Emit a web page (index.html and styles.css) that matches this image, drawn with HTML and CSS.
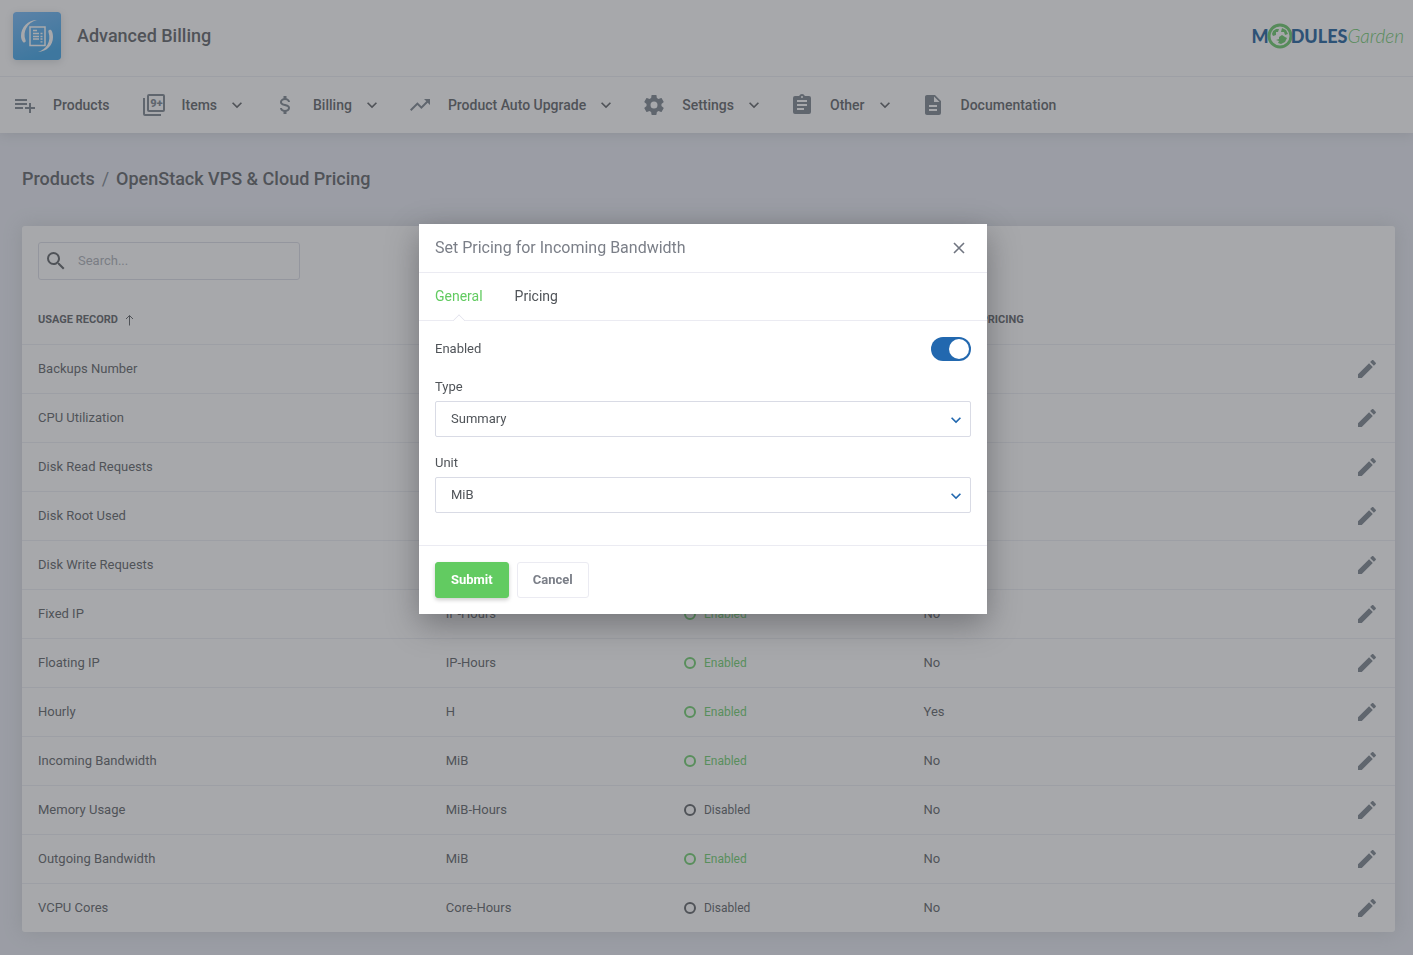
FILE: index.html
```html
<!DOCTYPE html>
<html lang="en">

<head>
    <meta charset="UTF-8">
    <meta name="viewport" content="width=device-width, initial-scale=1.0">
    <title>Advanced Billing</title>
    <link rel="stylesheet" href="styles.css">
</head>

<body>
    <svg class="sprite" xmlns="http://www.w3.org/2000/svg">
        <symbol id="chevron" viewBox="0 0 24 24">
            <path d="M7.41,8.58L12,13.17L16.59,8.58L18,10L12,16L6,10L7.41,8.58Z" />
        </symbol>
        <symbol id="pencil" viewBox="0 0 24 24">
            <path d="M20.71,7.04C21.1,6.65 21.1,6 20.71,5.63L18.37,3.29C18,2.9 17.35,2.9 16.96,3.29L15.12,5.12L18.87,8.87M3,17.25V21H6.75L17.81,9.93L14.06,6.18L3,17.25Z" />
        </symbol>
    </svg>

    <header class="header">
        <div class="top">
            <svg class="app-icon" viewBox="0 0 48 48">
                <defs>
                    <linearGradient id="blue" x1="0" y1="0" x2="0.4" y2="1">
                        <stop offset="0" stop-color="#69b3f7" />
                        <stop offset="1" stop-color="#2c9de6" />
                    </linearGradient>
                </defs>
                <rect width="48" height="48" rx="3" fill="url(#blue)" />
                <path fill="#fff" d="M24 8C15 8 8 15 8 24C8 27 9 29 10.500 30.500C12 31 13.300 29.500 12.500 28C9.500 20 14 10.500 24 8Z" />
                <path fill="#fff" d="M25 40C34 39.500 40 33 40 25C40 22 39.300 19.500 38.300 18.200C36.500 17 34.800 18.400 35.500 20.300C38.500 29 33.500 37.500 25 40Z" />
                <path fill="none" stroke="#fff" stroke-width="1.500" d="M17 15H32V33.500H17Z" />
                <path fill="none" stroke="#fff" stroke-width="1.300" d="M20 18.500H24M20 21.500H26M20 24.500H26M20 27H26M27.500 21.500H29.500M27.500 24.500H29.500M27.500 27H29.500M27.500 29.800H29.500" />
            </svg>
            <h1 class="app-name">Advanced Billing</h1>
            <a class="logo" href="#">
                <span class="logo-bold">M</span>
                <svg class="logo-globe" viewBox="0 0 26 26">
                    <circle cx="13" cy="13" r="11" fill="none" stroke="#5cc45c" stroke-width="3" />
                    <path fill="#5cc45c" d="M5 11L6 8L9 6L12 6L11 9L9 9L9 12L6 13ZM15 5L19 7L21 11L18 12L17 9L14 9ZM12 14L15 12L18 14L20 15L18 19L14 21L11 20L12 18L9 17L12 16Z" />
                </svg>
                <span class="logo-bold">DULES</span>
                <span class="logo-thin">Garden</span>
            </a>
        </div>
        <nav class="nav">
            <a class="nav-item" href="#">
                <svg class="icon" viewBox="0 0 24 24"><path d="M2,16H10V14H2M18,14V10H16V14H12V16H16V20H18V16H22V14M14,6H2V8H14M14,10H2V12H14V10Z" /></svg>
                Products
            </a>
            <a class="nav-item" href="#">
                <svg class="icon" viewBox="0 0 24 24">
                    <path d="M21,17V3H7V17H21M21,1A2,2 0 0,1 23,3V17A2,2 0 0,1 21,19H7A2,2 0 0,1 5,17V3A2,2 0 0,1 7,1H21M3,5V21H19V23H3A2,2 0 0,1 1,21V5H3Z" />
                    <text class="icon-text" x="14.500" y="14" text-anchor="middle">9+</text>
                </svg>
                Items
                <svg class="icon chevron"><use href="#chevron" /></svg>
            </a>
            <a class="nav-item" href="#">
                <svg class="icon" viewBox="0 0 24 24"><path d="M7,15H9C9,16.08 10.37,17 12,17C13.63,17 15,16.08 15,15C15,13.9 13.96,13.5 11.76,12.97C9.64,12.44 7,11.78 7,9C7,7.21 8.47,5.69 10.5,5.18V3H13.5V5.18C15.53,5.69 17,7.21 17,9H15C15,7.92 13.63,7 12,7C10.37,7 9,7.92 9,9C9,10.1 10.04,10.5 12.24,11.03C14.36,11.56 17,12.22 17,15C17,16.79 15.53,18.31 13.5,18.82V21H10.5V18.82C8.47,18.31 7,16.79 7,15Z" /></svg>
                Billing
                <svg class="icon chevron"><use href="#chevron" /></svg>
            </a>
            <a class="nav-item" href="#">
                <svg class="icon" viewBox="0 0 24 24"><path d="M16,6L18.29,8.29L13.41,13.17L9.41,9.17L2,16.59L3.41,18L9.41,12L13.41,16L19.71,9.71L22,12V6H16Z" /></svg>
                Product Auto Upgrade
                <svg class="icon chevron"><use href="#chevron" /></svg>
            </a>
            <a class="nav-item" href="#">
                <svg class="icon" viewBox="0 0 24 24"><path d="M12,15.5A3.5,3.5 0 0,1 8.5,12A3.5,3.5 0 0,1 12,8.5A3.5,3.5 0 0,1 15.5,12A3.5,3.5 0 0,1 12,15.5M19.43,12.97C19.47,12.65 19.5,12.33 19.5,12C19.5,11.67 19.47,11.34 19.43,11L21.54,9.37C21.73,9.22 21.78,8.95 21.66,8.73L19.66,5.27C19.54,5.05 19.27,4.96 19.05,5.05L16.56,6.05C16.04,5.66 15.5,5.32 14.87,5.07L14.5,2.42C14.46,2.18 14.25,2 14,2H10C9.75,2 9.54,2.18 9.5,2.42L9.13,5.07C8.5,5.32 7.96,5.66 7.44,6.05L4.95,5.05C4.73,4.96 4.46,5.05 4.34,5.27L2.34,8.73C2.21,8.95 2.27,9.22 2.46,9.37L4.57,11C4.53,11.34 4.5,11.67 4.5,12C4.5,12.33 4.53,12.65 4.57,12.97L2.46,14.63C2.27,14.78 2.21,15.05 2.34,15.27L4.34,18.73C4.46,18.95 4.73,19.03 4.95,18.95L7.44,17.94C7.96,18.34 8.5,18.68 9.13,18.93L9.5,21.58C9.54,21.82 9.75,22 10,22H14C14.25,22 14.46,21.82 14.5,21.58L14.87,18.93C15.5,18.67 16.04,18.34 16.56,17.94L19.05,18.95C19.27,19.03 19.54,18.95 19.66,18.73L21.66,15.27C21.78,15.05 21.73,14.78 21.54,14.63L19.43,12.97Z" /></svg>
                Settings
                <svg class="icon chevron"><use href="#chevron" /></svg>
            </a>
            <a class="nav-item" href="#">
                <svg class="icon" viewBox="0 0 24 24"><path fill-rule="evenodd" d="M17,9H7V7H17ZM17,13H7V11H17ZM14,17H7V15H14ZM12,3A1,1 0 0,1 13,4A1,1 0 0,1 12,5A1,1 0 0,1 11,4A1,1 0 0,1 12,3M19,3H14.82C14.4,1.84 13.3,1 12,1C10.7,1 9.6,1.84 9.18,3H5A2,2 0 0,0 3,5V19A2,2 0 0,0 5,21H19A2,2 0 0,0 21,19V5A2,2 0 0,0 19,3Z" /></svg>
                Other
                <svg class="icon chevron"><use href="#chevron" /></svg>
            </a>
            <a class="nav-item" href="#">
                <svg class="icon" viewBox="0 0 24 24"><path fill-rule="evenodd" d="M13,9H18.5L13,3.5V9M6,2H14L20,8V20A2,2 0 0,1 18,22H6C4.89,22 4,21.1 4,20V4C4,2.89 4.89,2 6,2M16,18V16H8V18H16M16,14V12H8V14H16Z" /></svg>
                Documentation
            </a>
        </nav>
    </header>

    <main class="main">
        <h2 class="breadcrumbs"><a href="#">Products</a><span class="slash">/</span>OpenStack VPS &amp; Cloud Pricing</h2>
        <section class="card">
            <div class="toolbar">
                <label class="search">
                    <svg class="icon" viewBox="0 0 24 24"><path d="M9.5,3A6.5,6.5 0 0,1 16,9.5C16,11.11 15.41,12.59 14.44,13.73L14.71,14H15.5L20.5,19L19,20.5L14,15.5V14.71L13.73,14.44C12.59,15.41 11.11,16 9.5,16A6.5,6.5 0 0,1 3,9.5A6.5,6.5 0 0,1 9.5,3M9.5,5C7,5 5,7 5,9.5C5,12 7,14 9.5,14C12,14 14,12 14,9.5C14,7 12,5 9.5,5Z" /></svg>
                    <input type="text" placeholder="Search..." aria-label="Search">
                </label>
            </div>
            <table class="table">
                <colgroup>
                    <col class="col-record">
                    <col class="col-unit">
                    <col class="col-status">
                    <col>
                    <col class="col-actions">
                </colgroup>
                <thead>
                    <tr>
                        <th>Usage Record <svg class="sort" viewBox="0 0 9 12"><path d="M4.500 11.500V1.500M1 5L4.500 1.500L8 5" /></svg></th>
                        <th>Unit</th>
                        <th>Status</th>
                        <th>Extended Pricing</th>
                        <th></th>
                    </tr>
                </thead>
                <tbody id="rows"></tbody>
            </table>
        </section>
    </main>

    <div class="overlay">
        <form class="modal" role="dialog" aria-labelledby="modalTitle">
            <div class="modal-header">
                <h3 class="modal-title" id="modalTitle">Set Pricing for Incoming Bandwidth</h3>
                <button class="close" type="button" aria-label="Close">
                    <svg viewBox="0 0 12 12"><path d="M1 1L11 11M11 1L1 11" /></svg>
                </button>
            </div>
            <div class="tabs">
                <a class="tab tab-active" href="#">General</a>
                <a class="tab" href="#">Pricing</a>
            </div>
            <div class="modal-body">
                <div class="switch-row">
                    <label for="enabled">Enabled</label>
                    <input class="switch" type="checkbox" id="enabled" checked>
                </div>
                <div class="field">
                    <label for="type">Type</label>
                    <div class="select">
                        <select id="type">
                            <option>Summary</option>
                        </select>
                        <svg class="select-arrow"><use href="#chevron" /></svg>
                    </div>
                </div>
                <div class="field">
                    <label for="unit">Unit</label>
                    <div class="select">
                        <select id="unit">
                            <option>MiB</option>
                        </select>
                        <svg class="select-arrow"><use href="#chevron" /></svg>
                    </div>
                </div>
            </div>
            <div class="modal-footer">
                <button class="btn btn-submit" type="button">Submit</button>
                <button class="btn btn-cancel" type="button">Cancel</button>
            </div>
        </form>
    </div>

    <script>
        let rows = document.getElementById("rows");
        // name, unit, status, pricing
        let records = [
            ["Backups Number", "", "Enabled", "No"],
            ["CPU Utilization", "%", "Enabled", "No"],
            ["Disk Read Requests", "", "Enabled", "No"],
            ["Disk Root Used", "MiB", "Enabled", "No"],
            ["Disk Write Requests", "", "Enabled", "No"],
            ["Fixed IP", "IP-Hours", "Enabled", "No"],
            ["Floating IP", "IP-Hours", "Enabled", "No"],
            ["Hourly", "H", "Enabled", "Yes"],
            ["Incoming Bandwidth", "MiB", "Enabled", "No"],
            ["Memory Usage", "MiB-Hours", "Disabled", "No"],
            ["Outgoing Bandwidth", "MiB", "Enabled", "No"],
            ["VCPU Cores", "Core-Hours", "Disabled", "No"]
        ];

        rows.innerHTML = records.map(([name, unit, status, pricing]) => `
            <tr>
                <td>${name}</td>
                <td>${unit}</td>
                <td><span class="status ${status.toLowerCase()}">${status}</span></td>
                <td>${pricing}</td>
                <td><button class="edit" type="button" aria-label="Edit ${name}"><svg class="icon"><use href="#pencil" /></svg></button></td>
            </tr>`).join("");
    </script>
</body>

</html>
```
FILE: styles.css
```css
*,
*::before,
*::after {
    margin: 0;
    padding: 0;
    box-sizing: border-box;
}

body {
    min-height: 100vh;
    background: #e6e9f2;
    color: #505459;
    font: 13px/20px Roboto, "Liberation Sans", sans-serif;
}

a {
    color: inherit;
    text-decoration: none;
}

button,
input,
select {
    font: inherit;
    color: inherit;
}

.sprite {
    position: absolute;
    width: 0;
    height: 0;
}

.icon {
    width: 24px;
    height: 24px;
    flex: none;
    fill: #707a85;
}

.icon-text {
    font-size: 11px;
    font-weight: 900;
}

.header {
    background: #fff;
    box-shadow: 0 1px 12px rgba(80, 90, 90, .2);
}

.top {
    display: flex;
    align-items: center;
    height: 77px;
    padding: 0 9px 4px 13px;
    border-bottom: 1px solid #ebedf2;
}

.app-icon {
    width: 48px;
    height: 48px;
    margin-right: 16px;
    border-radius: 3px;
    box-shadow: 0 2px 8px rgba(80, 90, 100, .25);
}

.app-name {
    font-size: 18px;
    font-weight: 500;
}

.logo {
    display: flex;
    align-items: center;
    margin-left: auto;
    font-size: 19px;
    font-family: Lato, sans-serif;
}

.logo-bold {
    font-size: 18px;
    font-weight: 900;
    color: #0b5394;
}

.logo-globe {
    width: 26px;
    height: 26px;
    margin: 0 -2px;
}

.logo-thin {
    font-weight: 300;
    font-style: italic;
    color: #5cc45c;
}

.nav {
    display: flex;
    gap: 32px;
    height: 56px;
    padding: 0 13px;
}

.nav-item {
    display: flex;
    align-items: center;
    gap: 16px;
    font-size: 14px;
    font-weight: 500;
    white-space: nowrap;
}

.chevron {
    width: 20px;
    height: 20px;
    margin: 0 -6px;
    fill: #505459;
}

.main {
    padding: 34px 18px 22px 22px;
}

.breadcrumbs {
    margin-bottom: 35px;
    font-size: 18px;
    line-height: 24px;
    font-weight: 500;
}

.slash {
    margin: 0 7px;
    font-weight: 400;
    color: #707a85;
}

.card {
    background: #fff;
    border-radius: 3px;
    box-shadow: 0 0 20px rgba(80, 90, 80, .18);
}

.toolbar {
    padding: 16px 16px 14px;
}

.search {
    display: flex;
    align-items: center;
    gap: 10px;
    width: 262px;
    height: 38px;
    padding: 0 5px;
    border: 1px solid #d9dbe5;
    border-radius: 3px;
}

.search .icon {
    fill: #505459;
}

.search input {
    width: 100%;
    border: 0;
    outline: 0;
    background: none;
}

.search input::placeholder {
    color: #a5a9b1;
}

.table {
    width: 100%;
    table-layout: fixed;
    border-collapse: collapse;
}

.col-record {
    width: 29.7%;
}

.col-unit {
    width: 17.35%;
}

.col-status {
    width: 17.45%;
}

.col-actions {
    width: 56px;
}

.table th {
    height: 50px;
    padding: 2px 16px 0;
    text-align: left;
    font-size: 11px;
    font-weight: 700;
    text-transform: uppercase;
    white-space: nowrap;
}

.table td {
    height: 49px;
    padding: 0 16px;
    border-top: 1px solid #ebedf2;
}

.sort {
    width: 9px;
    height: 12px;
    margin-left: 4px;
    vertical-align: middle;
    fill: none;
    stroke: #505459;
}

.status {
    display: flex;
    align-items: center;
    gap: 8px;
    font-size: 12px;
}

.status::before {
    content: "";
    width: 12px;
    height: 12px;
    border: 2px solid;
    border-radius: 50%;
}

.enabled {
    color: #62cb61;
}

.edit,
.close {
    display: block;
    border: 0;
    background: none;
}

.edit {
    height: 24px;
}

.overlay {
    display: flex;
    justify-content: center;
    align-items: flex-start;
    position: fixed;
    inset: 0;
    padding: 224px 7px 0 0;
    background: rgba(80, 82, 88, .5);
}

.modal {
    width: 568px;
    background: #fff;
    box-shadow: 0 10px 30px rgba(40, 40, 45, .4);
}

.modal-header {
    display: flex;
    align-items: center;
    justify-content: space-between;
    height: 49px;
    padding: 0 16px;
    border-bottom: 1px solid #ebebf2;
}

.modal-title {
    font-size: 16px;
    font-weight: 400;
    color: #7b7f88;
}

.close {
    width: 24px;
    height: 24px;
    padding: 6px;
}

.close svg {
    display: block;
    width: 12px;
    height: 12px;
    fill: none;
    stroke: #707580;
    stroke-width: 1.6;
}

.tabs {
    display: flex;
    gap: 32px;
    height: 48px;
    padding: 0 16px;
    border-bottom: 1px solid #ebebf2;
}

.tab {
    position: relative;
    font-size: 14px;
    line-height: 47px;
}

.tab-active {
    color: #62cb61;
}

/* notch above the line */
.tab-active::after {
    content: "";
    position: absolute;
    left: calc(50% - 5px);
    bottom: -6px;
    width: 10px;
    height: 10px;
    background: #fff;
    border: solid #e2e2ec;
    border-width: 1px 0 0 1px;
    transform: rotate(45deg);
    clip-path: polygon(0 0, 100% 0, 0 100%);
}

.modal-body {
    display: grid;
    gap: 16px;
    padding: 16px 16px 32px;
}

.switch-row {
    display: flex;
    align-items: center;
    justify-content: space-between;
}

.switch {
    appearance: none;
    display: flex;
    justify-content: flex-end;
    width: 40px;
    height: 24px;
    padding: 2px;
    border-radius: 12px;
    background: #2268af;
}

.switch::before {
    content: "";
    width: 20px;
    height: 20px;
    border-radius: 50%;
    background: #fff;
}

.field label {
    display: block;
    margin-bottom: 4px;
}

.select {
    position: relative;
}

.select select {
    appearance: none;
    display: block;
    width: 100%;
    height: 36px;
    padding: 0 32px 0 15px;
    border: 1px solid #d9dbe5;
    border-radius: 2px;
    background: #fff;
}

.select-arrow {
    position: absolute;
    right: 5px;
    top: 9px;
    width: 20px;
    height: 20px;
    fill: #2268af;
    pointer-events: none;
}

.modal-footer {
    display: flex;
    gap: 8px;
    padding: 16px;
    border-top: 1px solid #ebebf2;
}

.btn {
    height: 36px;
    padding: 0 15px;
    border: 1px solid #ebebf2;
    border-radius: 3px;
    background: #fff;
    font-weight: 700;
}

.btn-submit {
    border-color: #62cb61;
    background: #62cb61;
    color: #fff;
    box-shadow: 0 2px 4px rgba(0, 0, 0, .2);
}

.btn-cancel {
    color: #7b7f88;
}
```
